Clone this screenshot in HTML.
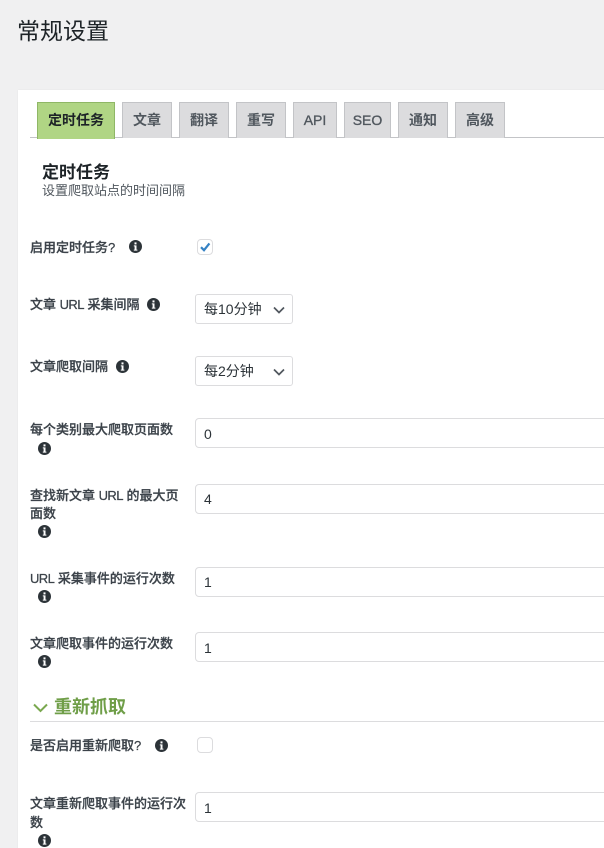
<!DOCTYPE html>
<html lang="zh"><head><meta charset="utf-8"><style>
html,body{margin:0;padding:0;width:604px;height:848px;overflow:hidden;background:#f0f0f1}
*{box-sizing:border-box}
body{position:relative;font-family:"Liberation Sans","Noto Sans CJK SC",sans-serif;color:#3c434a}
.a{position:absolute;white-space:nowrap}
#card{position:absolute;left:18px;top:90px;width:600px;height:770px;background:#fff;box-shadow:0 0 1px #ddd}
.tab{position:absolute;top:102px;height:36px;background:#dcdcde;border:1px solid #c3c4c7;border-bottom:0;font-size:14px;font-weight:700;line-height:34px;text-align:center;color:#50575e}
.lat{font-weight:400;-webkit-text-stroke:.35px #50575e}
.l{position:absolute;left:30px;font-size:13px;font-weight:500;line-height:18px;color:#3c434a;-webkit-text-stroke:.25px #3c434a;white-space:nowrap}
.l span{font-weight:400;letter-spacing:-.6px}
.inp{position:absolute;left:195px;width:420px;height:30px;background:#fff;border:1px solid #dcdcde;border-radius:4px;font-size:14px;line-height:29px;padding-left:8px;color:#2c3338}
.sel{position:absolute;left:195px;width:98px;height:30px;background:#fff;border:1px solid #dcdcde;border-radius:3px;font-size:14px;line-height:28px;padding-left:8px;color:#2c3338}
.sel svg{position:absolute;left:77px;top:11px}
.i{position:absolute;width:13px;height:13px}
.cb{position:absolute;left:197px;width:16px;height:16px;border:1px solid #dcdcde;border-radius:4px;background:#fff}
</style></head><body>
<div class="a" style="left:17px;top:14px;font-size:23px;line-height:34px;color:#1d2327">常规设置</div>
<div id="card"></div>
<div class="a" style="left:30px;top:137px;width:574px;height:1px;background:#c3c4c7"></div>
<div class="tab" style="left:37px;width:78px;background:#b0d584;border-color:#8fb766;color:#1d2327;height:37px">定时任务</div>
<div class="tab" style="left:122px;width:50px">文章</div>
<div class="tab" style="left:179px;width:50px">翻译</div>
<div class="tab" style="left:236px;width:50px">重写</div>
<div class="tab lat" style="left:293px;width:44px">API</div>
<div class="tab lat" style="left:344px;width:47px">SEO</div>
<div class="tab" style="left:398px;width:50px">通知</div>
<div class="tab" style="left:455px;width:50px">高级</div>
<div class="a" style="left:42px;top:161px;font-size:17px;font-weight:700;line-height:23px;color:#1d2327">定时任务</div>
<div class="a" style="left:42px;top:182px;font-size:13px;line-height:18px;color:#50575e">设置爬取站点的时间间隔</div>

<svg width="0" height="0" style="position:absolute"><defs><symbol id="info" viewBox="0 0 13 13"><circle cx="6.5" cy="6.5" r="6.5" fill="#2c3338"/><rect x="5.5" y="2.4" width="2" height="2" fill="#fff"/><path d="M4.8 5.4H7.5V9.6H8.4V10.6H4.8V9.6H5.6V6.4H4.8Z" fill="#fff"/></symbol></defs></svg>

<div class="l" style="top:239px">启用定时任务?</div>
<svg class="i" style="left:129px;top:240px"><use href="#info"/></svg>
<div class="cb" style="top:239px"><svg width="14" height="14" style="position:absolute;left:0;top:0"><path d="M3 7.2L6 10.2L11.4 3.4" fill="none" stroke="#3582c4" stroke-width="2.2"/></svg></div>

<div class="l" style="top:296px">文章 <span>URL</span> 采集间隔</div>
<svg class="i" style="left:147px;top:298px"><use href="#info"/></svg>
<div class="sel" style="top:294px">每10分钟<svg width="12" height="8"><path d="M1 1.5L6 6.5L11 1.5" fill="none" stroke="#50575e" stroke-width="1.7"/></svg></div>

<div class="l" style="top:358px">文章爬取间隔</div>
<svg class="i" style="left:116px;top:360px"><use href="#info"/></svg>
<div class="sel" style="top:356px">每2分钟<svg width="12" height="8"><path d="M1 1.5L6 6.5L11 1.5" fill="none" stroke="#50575e" stroke-width="1.7"/></svg></div>

<div class="l" style="top:421px">每个类别最大爬取页面数</div>
<svg class="i" style="left:38px;top:442px"><use href="#info"/></svg>
<div class="inp" style="top:418px;line-height:30px">0</div>

<div class="l" style="top:487px">查找新文章 <span>URL</span> 的最大页<br>面数</div>
<svg class="i" style="left:38px;top:525px"><use href="#info"/></svg>
<div class="inp" style="top:484px">4</div>

<div class="l" style="top:570px"><span>URL</span> 采集事件的运行次数</div>
<svg class="i" style="left:38px;top:590px"><use href="#info"/></svg>
<div class="inp" style="top:567px">1</div>

<div class="l" style="top:635px">文章爬取事件的运行次数</div>
<svg class="i" style="left:38px;top:655px"><use href="#info"/></svg>
<div class="inp" style="top:632px;line-height:30px">1</div>

<svg class="a" style="left:33px;top:703px" width="15" height="10"><path d="M1 1.5L7.5 8L14 1.5" fill="none" stroke="#7aa84f" stroke-width="2"/></svg>
<div class="a" style="left:54px;top:695px;font-size:18px;font-weight:700;line-height:24px;color:#6f9e48">重新抓取</div>
<div class="a" style="left:30px;top:721px;width:574px;height:1px;background:#dcdcde"></div>

<div class="l" style="top:737px">是否启用重新爬取?</div>
<svg class="i" style="left:155px;top:739px"><use href="#info"/></svg>
<div class="cb" style="top:737px"></div>

<div class="l" style="top:794px;line-height:19px">文章重新爬取事件的运行次<br>数</div>
<svg class="i" style="left:38px;top:834px"><use href="#info"/></svg>
<div class="inp" style="top:792px;line-height:30px">1</div>
</body></html>
